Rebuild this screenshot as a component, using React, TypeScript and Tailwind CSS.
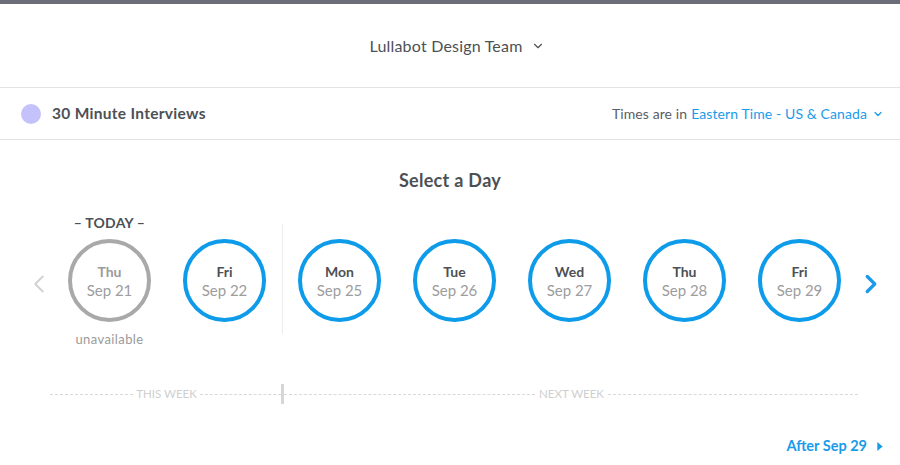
import { ChevronDown, ChevronLeft, ChevronRight } from "lucide-react";

type Day = { name: string; date: string; available: boolean; today?: boolean };

const THIS_WEEK: Day[] = [
  { name: "Thu", date: "Sep 21", available: false, today: true },
  { name: "Fri", date: "Sep 22", available: true },
];

const NEXT_WEEK: Day[] = [
  { name: "Mon", date: "Sep 25", available: true },
  { name: "Tue", date: "Sep 26", available: true },
  { name: "Wed", date: "Sep 27", available: true },
  { name: "Thu", date: "Sep 28", available: true },
  { name: "Fri", date: "Sep 29", available: true },
];

function DayCircle({ day }: { day: Day }) {
  return (
    <div className="flex w-[83px] flex-col items-center">
      <div className="mt-[2px] h-[16px] whitespace-nowrap text-[14px] font-bold leading-[16px] tracking-[0.2px] text-[#4d5055]">
        {day.today ? "– TODAY –" : ""}
      </div>
      <button
        type="button"
        className={
          day.available
            ? "mt-[8px] flex h-[83px] w-[83px] flex-col items-center justify-center rounded-full border-[4px] border-[#0d9bea]"
            : "mt-[8px] flex h-[83px] w-[83px] flex-col items-center justify-center rounded-full border-[4px] border-[#a9a9a9]"
        }
      >
        <span
          className={
            day.available
              ? "text-[14px] font-bold leading-[18px] text-[#4d5055]"
              : "text-[14px] font-bold leading-[18px] text-[#9a9a9a]"
          }
        >
          {day.name}
        </span>
        <span className="text-[15px] leading-[18px] text-[#9d9d9d]">{day.date}</span>
      </button>
      <div className="mt-[9px] h-[16px] text-[13px] leading-[16px] tracking-[0.4px] text-[#9a9a9a]">
        {day.available ? "" : "unavailable"}
      </div>
    </div>
  );
}

export default function App() {
  return (
    <div
      className="h-[465px] w-full overflow-hidden bg-white"
      style={{ fontFamily: "Lato, 'Open Sans', sans-serif" }}
    >
      <div className="h-[4px] bg-[#6b6e79]" />

      <header className="flex h-[84px] items-center justify-center border-b border-[#e3e3e3]">
        <button
          type="button"
          className="flex items-center gap-[8px] pl-[14px] text-[16px] tracking-[0.2px] text-[#4d5055]"
        >
          Lullabot Design Team
          <ChevronDown className="h-[14px] w-[14px]" strokeWidth={2} />
        </button>
      </header>

      <div className="flex h-[52px] items-center justify-between border-b border-[#e3e3e3] pl-[21px] pr-[16px]">
        <div className="flex items-center gap-[11px]">
          <span className="h-[20px] w-[20px] rounded-full bg-[#c5c1fb]" />
          <span className="text-[15.5px] font-bold tracking-[0.3px] text-[#4d5055]">
            30 Minute Interviews
          </span>
        </div>
        <div className="flex items-center text-[14px] tracking-[0.1px] text-[#5a5d63]">
          Times are in
          <span className="ml-[4px] text-[#1a9bea]">Eastern Time - US &amp; Canada</span>
          <ChevronDown className="ml-[5px] h-[12px] w-[12px] text-[#1a9bea]" strokeWidth={2.5} />
        </div>
      </div>

      <h2 className="pt-[28px] text-center text-[18px] font-bold leading-[24px] tracking-[0.3px] text-[#4d5055]">
        Select a Day
      </h2>

      <div className="mt-[21px] flex items-start">
        <div className="mt-[56px] flex w-[68px] justify-end pr-[14px]">
          <ChevronLeft className="h-[30px] w-[30px] text-[#d2d2d2]" strokeWidth={1.6} />
        </div>
        <div className="flex items-start gap-[32px]">
          {THIS_WEEK.map((d) => (
            <DayCircle key={d.date} day={d} />
          ))}
        </div>
        <div className="mx-[15.5px] mt-[11px] h-[110px] w-px bg-[#ececec]" />
        <div className="flex items-start gap-[32px]">
          {NEXT_WEEK.map((d) => (
            <DayCircle key={d.date} day={d} />
          ))}
        </div>
        <div className="mt-[56px] flex pl-[15px]">
          <ChevronRight className="h-[30px] w-[30px] text-[#1a9bea]" strokeWidth={2.6} />
        </div>
      </div>

      <div className="mt-[37px] flex h-[20px] items-center pl-[50px]">
        <div className="w-[83px] border-t border-dashed border-[#d9d9d9]" />
        <span className="w-[67px] text-center text-[11.5px] leading-none text-[#cfcfcf]">THIS WEEK</span>
        <div className="w-[81px] border-t border-dashed border-[#d9d9d9]" />
        <div className="h-[20px] w-[3px] bg-[#d6d6d6]" />
        <div className="w-[251px] border-t border-dashed border-[#d9d9d9]" />
        <span className="w-[73px] text-center text-[11.5px] leading-none text-[#cfcfcf]">NEXT WEEK</span>
        <div className="w-[250px] border-t border-dashed border-[#d9d9d9]" />
      </div>

      <div className="mt-[32px] flex justify-end pr-[17px]">
        <button
          type="button"
          className="flex items-center text-[14.5px] font-bold leading-[20px] text-[#1a9bea]"
        >
          After Sep 29
          <svg viewBox="0 0 6 10" className="ml-[10px] h-[9px] w-[6px]" fill="currentColor">
            <path d="M0 0 L6 5 L0 10 Z" />
          </svg>
        </button>
      </div>
    </div>
  );
}
